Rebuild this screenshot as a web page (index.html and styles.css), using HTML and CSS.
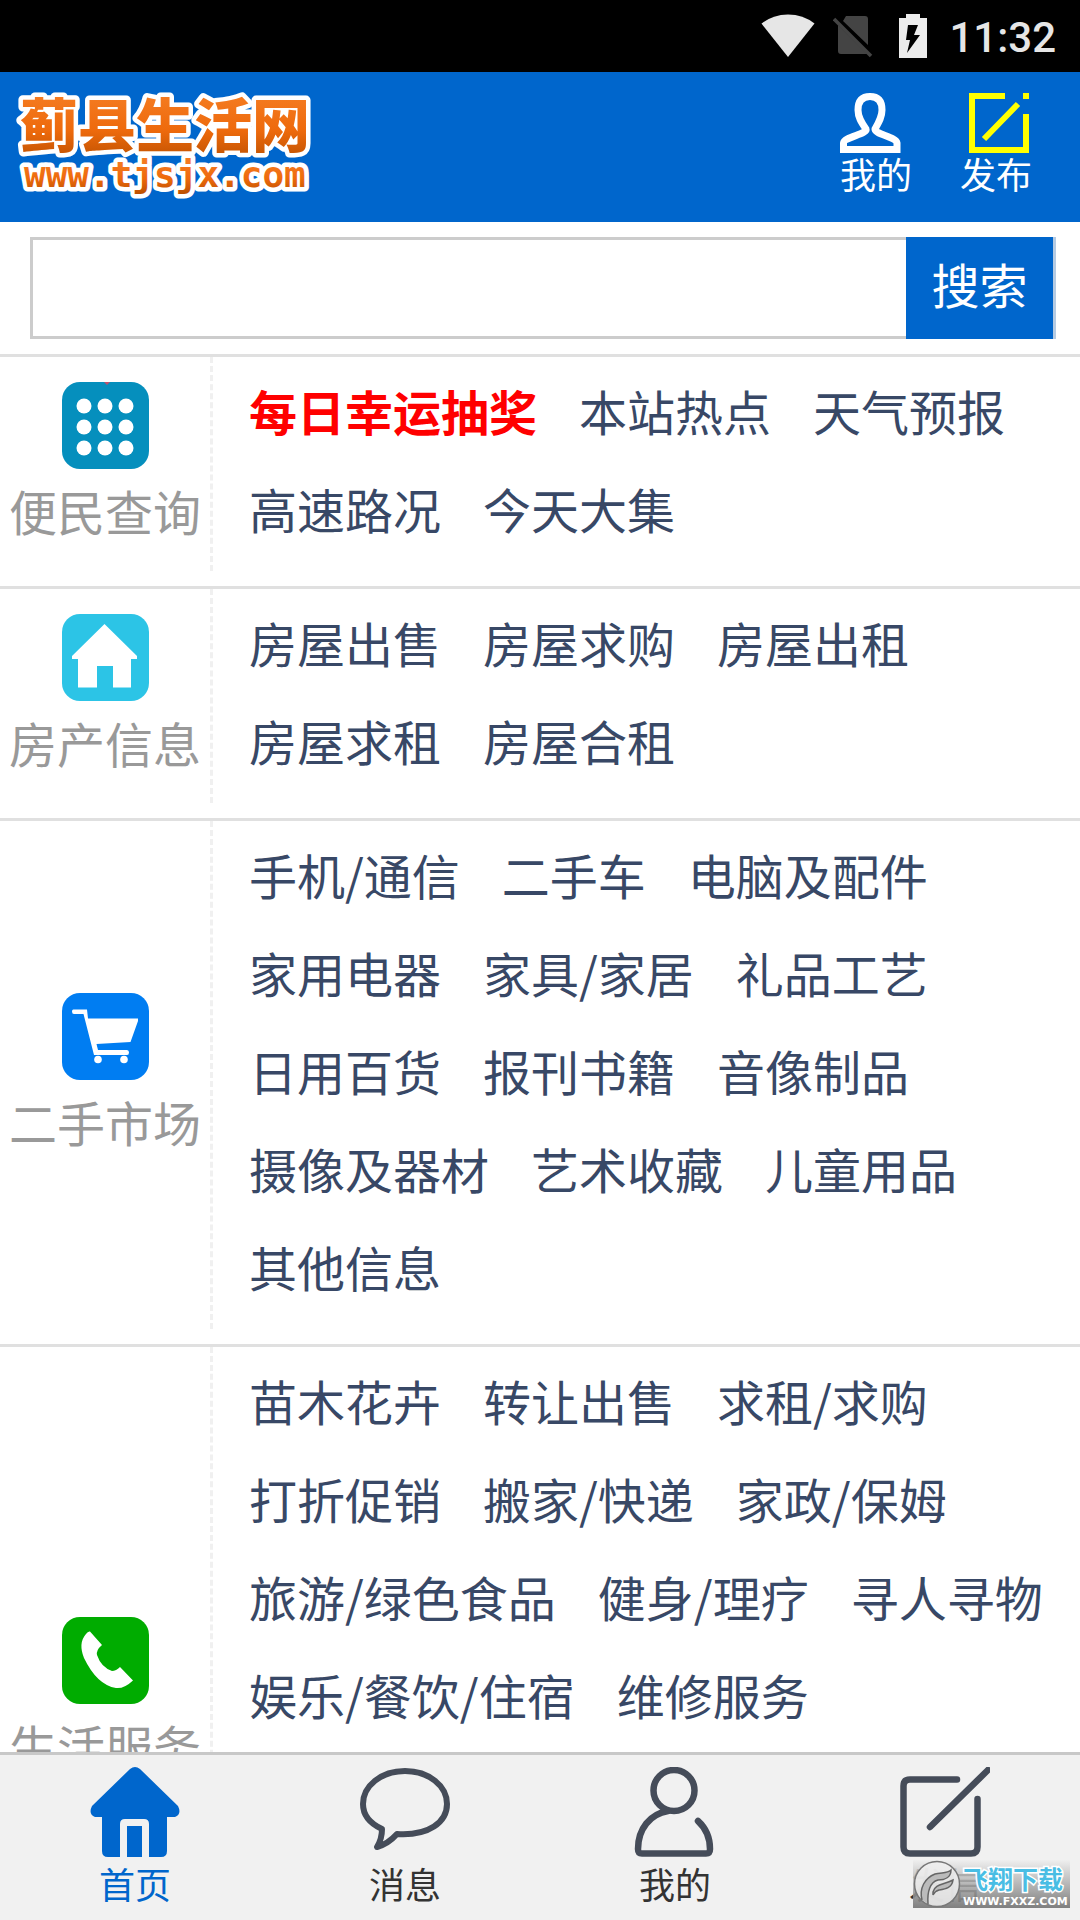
FILE: index.html
```html
<!DOCTYPE html>
<html lang="zh-CN">
<head>
  <meta charset="UTF-8" />
  <title>蓟县生活网</title>
  <meta name="viewport" content="width=device-width, initial-scale=1.0" />
  <link rel="stylesheet" href="styles.css">
</head>
<body>
  <div class="status-bar">
    <svg class="wifi" width="54" height="44" viewBox="0 0 54 44"><path d="M0.5 9.500Q12 0.500 27 0.500T53.500 9.500L27 43Z" fill="#e6e6e6"/></svg>
    <svg class="sim" width="40" height="44" viewBox="0 0 40 44">
      <path d="M13 2H32Q35 2 35 5V31L10 7ZM5 11L35 40H8Q5 40 5 37Z" fill="#444"/>
      <path d="M1 5L38 42" stroke="#444" stroke-width="3.500"/>
    </svg>
    <svg class="battery" width="28" height="44" viewBox="0 0 28 44">
      <path d="M7 0H21V4H28V44H0V4H7Z" fill="#ececec"/>
      <path d="M9 11H19L15 21H21L8 39L11 26H7Z" fill="#000"/>
    </svg>
    <span class="time">11:32</span>
  </div>

  <header class="header">
    <a href="#" class="logo" aria-label="蓟县生活网">
      <svg width="310" height="120" viewBox="0 0 310 120">
        <defs>
          <linearGradient id="orange" x1="0" y1="0" x2="0" y2="1">
            <stop offset="0.2" stop-color="#f47a20"/>
            <stop offset="0.6" stop-color="#ee6a0c"/>
            <stop offset="1" stop-color="#b84e00"/>
          </linearGradient>
        </defs>
        <text class="logo-name" x="8" y="54">蓟县生活网</text>
        <text class="logo-url" x="12" y="94">www.tjsjx.com</text>
      </svg>
    </a>
    <nav class="header-links">
      <a href="#">
        <svg width="72" height="60" viewBox="0 0 72 60" fill="none" stroke="#fff" stroke-width="7">
          <path d="M26 36C21 29 18 24 18 17C18 8 22 3.500 30 3.500S42 8 42 17C42 24 39 29 35 36C34 41 56 44 57 50V56.500H3.500V50C4 44 28 41 26 36Z"/>
        </svg>
        <span>我的</span>
      </a>
      <a href="#">
        <svg width="72" height="60" viewBox="0 0 72 60" fill="none" stroke="#ff0" stroke-width="6">
          <path d="M45 3H12V57H66V21M63 3H69M24 46L58 11"/>
        </svg>
        <span>发布</span>
      </a>
    </nav>
  </header>

  <form class="search" action="#">
    <input type="text" name="keyword" aria-label="搜索" />
    <button type="submit">搜索</button>
  </form>

  <main class="list">
    <section class="row">
      <a href="#" class="category">
        <svg width="87" height="87" viewBox="0 0 87 87">
          <rect width="87" height="87" rx="18" fill="#058fbd"/>
          <path d="M42 0H48L45 3Z" fill="#c0506a"/>
          <g fill="#fff">
            <circle cx="22" cy="24" r="7.500"/><circle cx="43" cy="24" r="7.500"/><circle cx="64" cy="24" r="7.500"/>
            <circle cx="22" cy="45" r="7.500"/><circle cx="43" cy="45" r="7.500"/><circle cx="64" cy="45" r="7.500"/>
            <circle cx="22" cy="66" r="7.500"/><circle cx="43" cy="66" r="7.500"/><circle cx="64" cy="66" r="7.500"/>
          </g>
        </svg>
        <span>便民查询</span>
      </a>
      <div class="links">
        <a href="#" class="hot">每日幸运抽奖</a>
        <a href="#">本站热点</a>
        <a href="#">天气预报</a>
        <a href="#">高速路况</a>
        <a href="#">今天大集</a>
      </div>
    </section>

    <section class="row">
      <a href="#" class="category">
        <svg width="87" height="87" viewBox="0 0 87 87">
          <rect width="87" height="87" rx="18" fill="#2cc4e6"/>
          <path d="M42.500 10L75 42V45H69V73.500H51V52H35V73.500H16V45H10V42Z" fill="#fff"/>
        </svg>
        <span>房产信息</span>
      </a>
      <div class="links">
        <a href="#">房屋出售</a>
        <a href="#">房屋求购</a>
        <a href="#">房屋出租</a>
        <a href="#">房屋求租</a>
        <a href="#">房屋合租</a>
      </div>
    </section>

    <section class="row">
      <a href="#" class="category">
        <svg width="87" height="87" viewBox="0 0 87 87">
          <rect width="87" height="87" rx="18" fill="#007df2"/>
          <path d="M26 25.500H76V28L68.500 49L34.500 51L36 57H65Q67 57 67 59.500T65 62H32L21.500 21H12Q10 21 10 18.500T12 16.500H25Z" fill="#fff"/>
          <circle cx="36" cy="66.500" r="3.800" fill="#fff"/>
          <circle cx="62" cy="66.500" r="3.800" fill="#fff"/>
        </svg>
        <span>二手市场</span>
      </a>
      <div class="links">
        <a href="#">手机/通信</a>
        <a href="#">二手车</a>
        <a href="#">电脑及配件</a>
        <a href="#">家用电器</a>
        <a href="#">家具/家居</a>
        <a href="#">礼品工艺</a>
        <a href="#">日用百货</a>
        <a href="#">报刊书籍</a>
        <a href="#">音像制品</a>
        <a href="#">摄像及器材</a>
        <a href="#">艺术收藏</a>
        <a href="#">儿童用品</a>
        <a href="#">其他信息</a>
      </div>
    </section>

    <section class="row row-service">
      <a href="#" class="category">
        <svg width="87" height="87" viewBox="0 0 87 87">
          <rect width="87" height="87" rx="18" fill="#00ac00"/>
          <path d="M28 14.500L40 28Q34 33 35 38Q39 50 50 54Q54 54 58 50L71 63.500Q62 72 54 71Q35 68 22 41Q16 26 24 17Q26 14 28 14.500Z" fill="#fff"/>
        </svg>
        <span>生活服务</span>
      </a>
      <div class="links">
        <a href="#">苗木花卉</a>
        <a href="#">转让出售</a>
        <a href="#">求租/求购</a>
        <a href="#">打折促销</a>
        <a href="#">搬家/快递</a>
        <a href="#">家政/保姆</a>
        <a href="#">旅游/绿色食品</a>
        <a href="#">健身/理疗</a>
        <a href="#">寻人寻物</a>
        <a href="#">娱乐/餐饮/住宿</a>
        <a href="#">维修服务</a>
      </div>
    </section>
  </main>

  <nav class="tab-bar">
    <a href="#" class="active">
      <svg width="90" height="90" viewBox="0 0 90 90" fill="#0066cc">
        <path d="M40 2Q45 -2 50 2L88 39Q92 47 85 50H77V84Q77 90 71 90H59V57Q59 52 54 52H35Q30 52 30 57V90H18Q12 90 12 84V50H5Q-2 47 2 39Z"/>
        <path d="M37 59H52V90H37Z"/>
      </svg>
      <span>首页</span>
    </a>
    <a href="#">
      <svg width="90" height="90" viewBox="0 0 90 90" fill="none" stroke="#454c59" stroke-width="6" stroke-linejoin="round">
        <path d="M22 62C9 56 3 47 3 37C3 19 21 4 45 4S87 19 87 37S69 69 37 67Q28 77 17 80Q22 72 22 62Z"/>
      </svg>
      <span>消息</span>
    </a>
    <a href="#">
      <svg width="90" height="90" viewBox="0 0 90 90" fill="none" stroke="#454c59" stroke-width="6.500" stroke-linecap="round" stroke-linejoin="round">
        <ellipse cx="44" cy="23.500" rx="20.500" ry="20.500"/>
        <path d="M38 44C20 47 8 62 8 82Q8 86.500 12 86.500H76Q80 86.500 80 82Q80 65 68 54"/>
      </svg>
      <span>我的</span>
    </a>
    <a href="#">
      <svg width="90" height="90" viewBox="0 0 90 90" fill="none" stroke="#454c59" stroke-width="6.500" stroke-linecap="round">
        <path d="M57 12.500H10Q3.500 12.500 3.500 19V80Q3.500 86.500 10 86.500H71Q77.500 86.500 77.500 80V32M30 60L88 3"/>
      </svg>
      <span>发信</span>
    </a>
  </nav>

  <div class="watermark">
    <svg width="157" height="48" viewBox="0 0 157 48">
      <circle cx="24" cy="24" r="22.500" fill="#eee" fill-opacity="0.850" stroke="#777" stroke-width="1.500"/>
      <path d="M9 40C6 28 12 18 22 14C28 12 34 14 38 10C38 17 32 20 25 20C17 22 14 32 15 44M20 32C22 24 30 25 40 20C39 28 32 29 26 30Q22 31 20 35Z" fill="#bbb" stroke="#666" stroke-width="1.500"/>
      <text class="mark-name" x="50" y="29">飞翔下载</text>
      <text class="mark-url" x="50" y="45">WWW.FXXZ.COM</text>
    </svg>
  </div>
</body>
</html>
```
FILE: styles.css
```css
* {
  box-sizing: border-box;
}

body {
  font-family: "Noto Sans CJK SC", sans-serif;
  background-color: #fff;
  margin: 0;
  height: 100vh;
  display: flex;
  flex-direction: column;
  overflow: hidden;
}

a {
  color: inherit;
  text-decoration: none;
}

svg {
  display: block;
}

.status-bar {
  display: flex;
  flex-shrink: 0;
  justify-content: flex-end;
  align-items: center;
  height: 72px;
  padding-right: 24px;
  background: #000;
}

.sim {
  margin-left: 18px;
}

.battery {
  margin-left: 26px;
}

.time {
  margin-left: 22px;
  padding-top: 2px;
  font-family: Roboto, sans-serif;
  font-size: 42px;
  font-weight: 500;
  color: #e6e6e6;
}

.header {
  display: flex;
  flex-shrink: 0;
  justify-content: space-between;
  height: 150px;
  padding: 21px 48px 0 12px;
  background: #0066cc;
  color: #fff;
}

.logo svg {
  overflow: visible;
}

.logo-name,
.logo-url {
  fill: url(#orange);
  stroke: #fff;
  stroke-width: 9px;
  stroke-linejoin: round;
  paint-order: stroke;
  font-weight: 900;
}

.logo-name {
  font-size: 58px;
}

.logo-url {
  font-family: "DejaVu Sans Mono", monospace;
  font-size: 36px;
}

.header-links {
  display: flex;
  gap: 48px;
  font-size: 36px;
  line-height: 40px;
}

.header-links span {
  display: block;
}

.search {
  display: flex;
  flex-shrink: 0;
  padding: 15px 24px 15px 30px;
  border-bottom: 3px solid #e0e0e0;
}

.search input {
  flex: 1;
  min-width: 0;
  height: 102px;
  padding: 0 20px;
  border: 3px solid #ccc;
  border-right: none;
  border-radius: 0;
  font-size: 48px;
  outline: none;
}

.search button {
  width: 150px;
  padding: 0 0 10px;
  border: none;
  border-right: 3px solid #b5cbe3;
  background: #0066cc;
  color: #fff;
  font-family: inherit;
  font-size: 48px;
}

.list {
  flex: 1;
  min-height: 0;
  overflow: hidden;
}

.row {
  display: flex;
  padding-bottom: 15px;
  border-bottom: 3px solid #e0e0e0;
}

.category {
  display: flex;
  flex-direction: column;
  align-items: center;
  justify-content: center;
  gap: 3px;
  width: 213px;
  flex-shrink: 0;
  padding-top: 3px;
  border-right: 3px dashed #f0f0f0;
  font-size: 48px;
  line-height: 77px;
  color: #999;
}

.links {
  display: flex;
  flex: 1;
  flex-wrap: wrap;
  align-content: flex-start;
  column-gap: 42px;
  padding: 4px 0 14px 36px;
  font-size: 48px;
  line-height: 98px;
  color: #384866;
}

.links .hot {
  color: #f00;
  font-weight: bold;
}

.row-service .links {
  min-height: 704px;
}

.tab-bar {
  display: flex;
  flex-shrink: 0;
  height: 168px;
  padding-top: 12px;
  border-top: 3px solid #c8c8c8;
  background: #f1f1f1;
  color: #333;
  font-size: 36px;
  line-height: 52px;
}

.tab-bar a {
  flex: 1;
  display: flex;
  flex-direction: column;
  align-items: center;
}

.tab-bar .active {
  color: #0066cc;
}

/* site badge over the bottom right corner */
.watermark {
  position: absolute;
  right: 10px;
  bottom: 12px;
  background: linear-gradient(rgba(238, 238, 238, 0.8), rgba(115, 115, 115, 0.9));
}

.mark-name {
  font-size: 25px;
  font-weight: bold;
  fill: #49bde4;
  stroke: #fff;
  stroke-width: 3px;
  paint-order: stroke;
}

.mark-url {
  font-family: "DejaVu Sans", sans-serif;
  font-size: 11px;
  font-weight: bold;
  fill: #fff;
}
```
